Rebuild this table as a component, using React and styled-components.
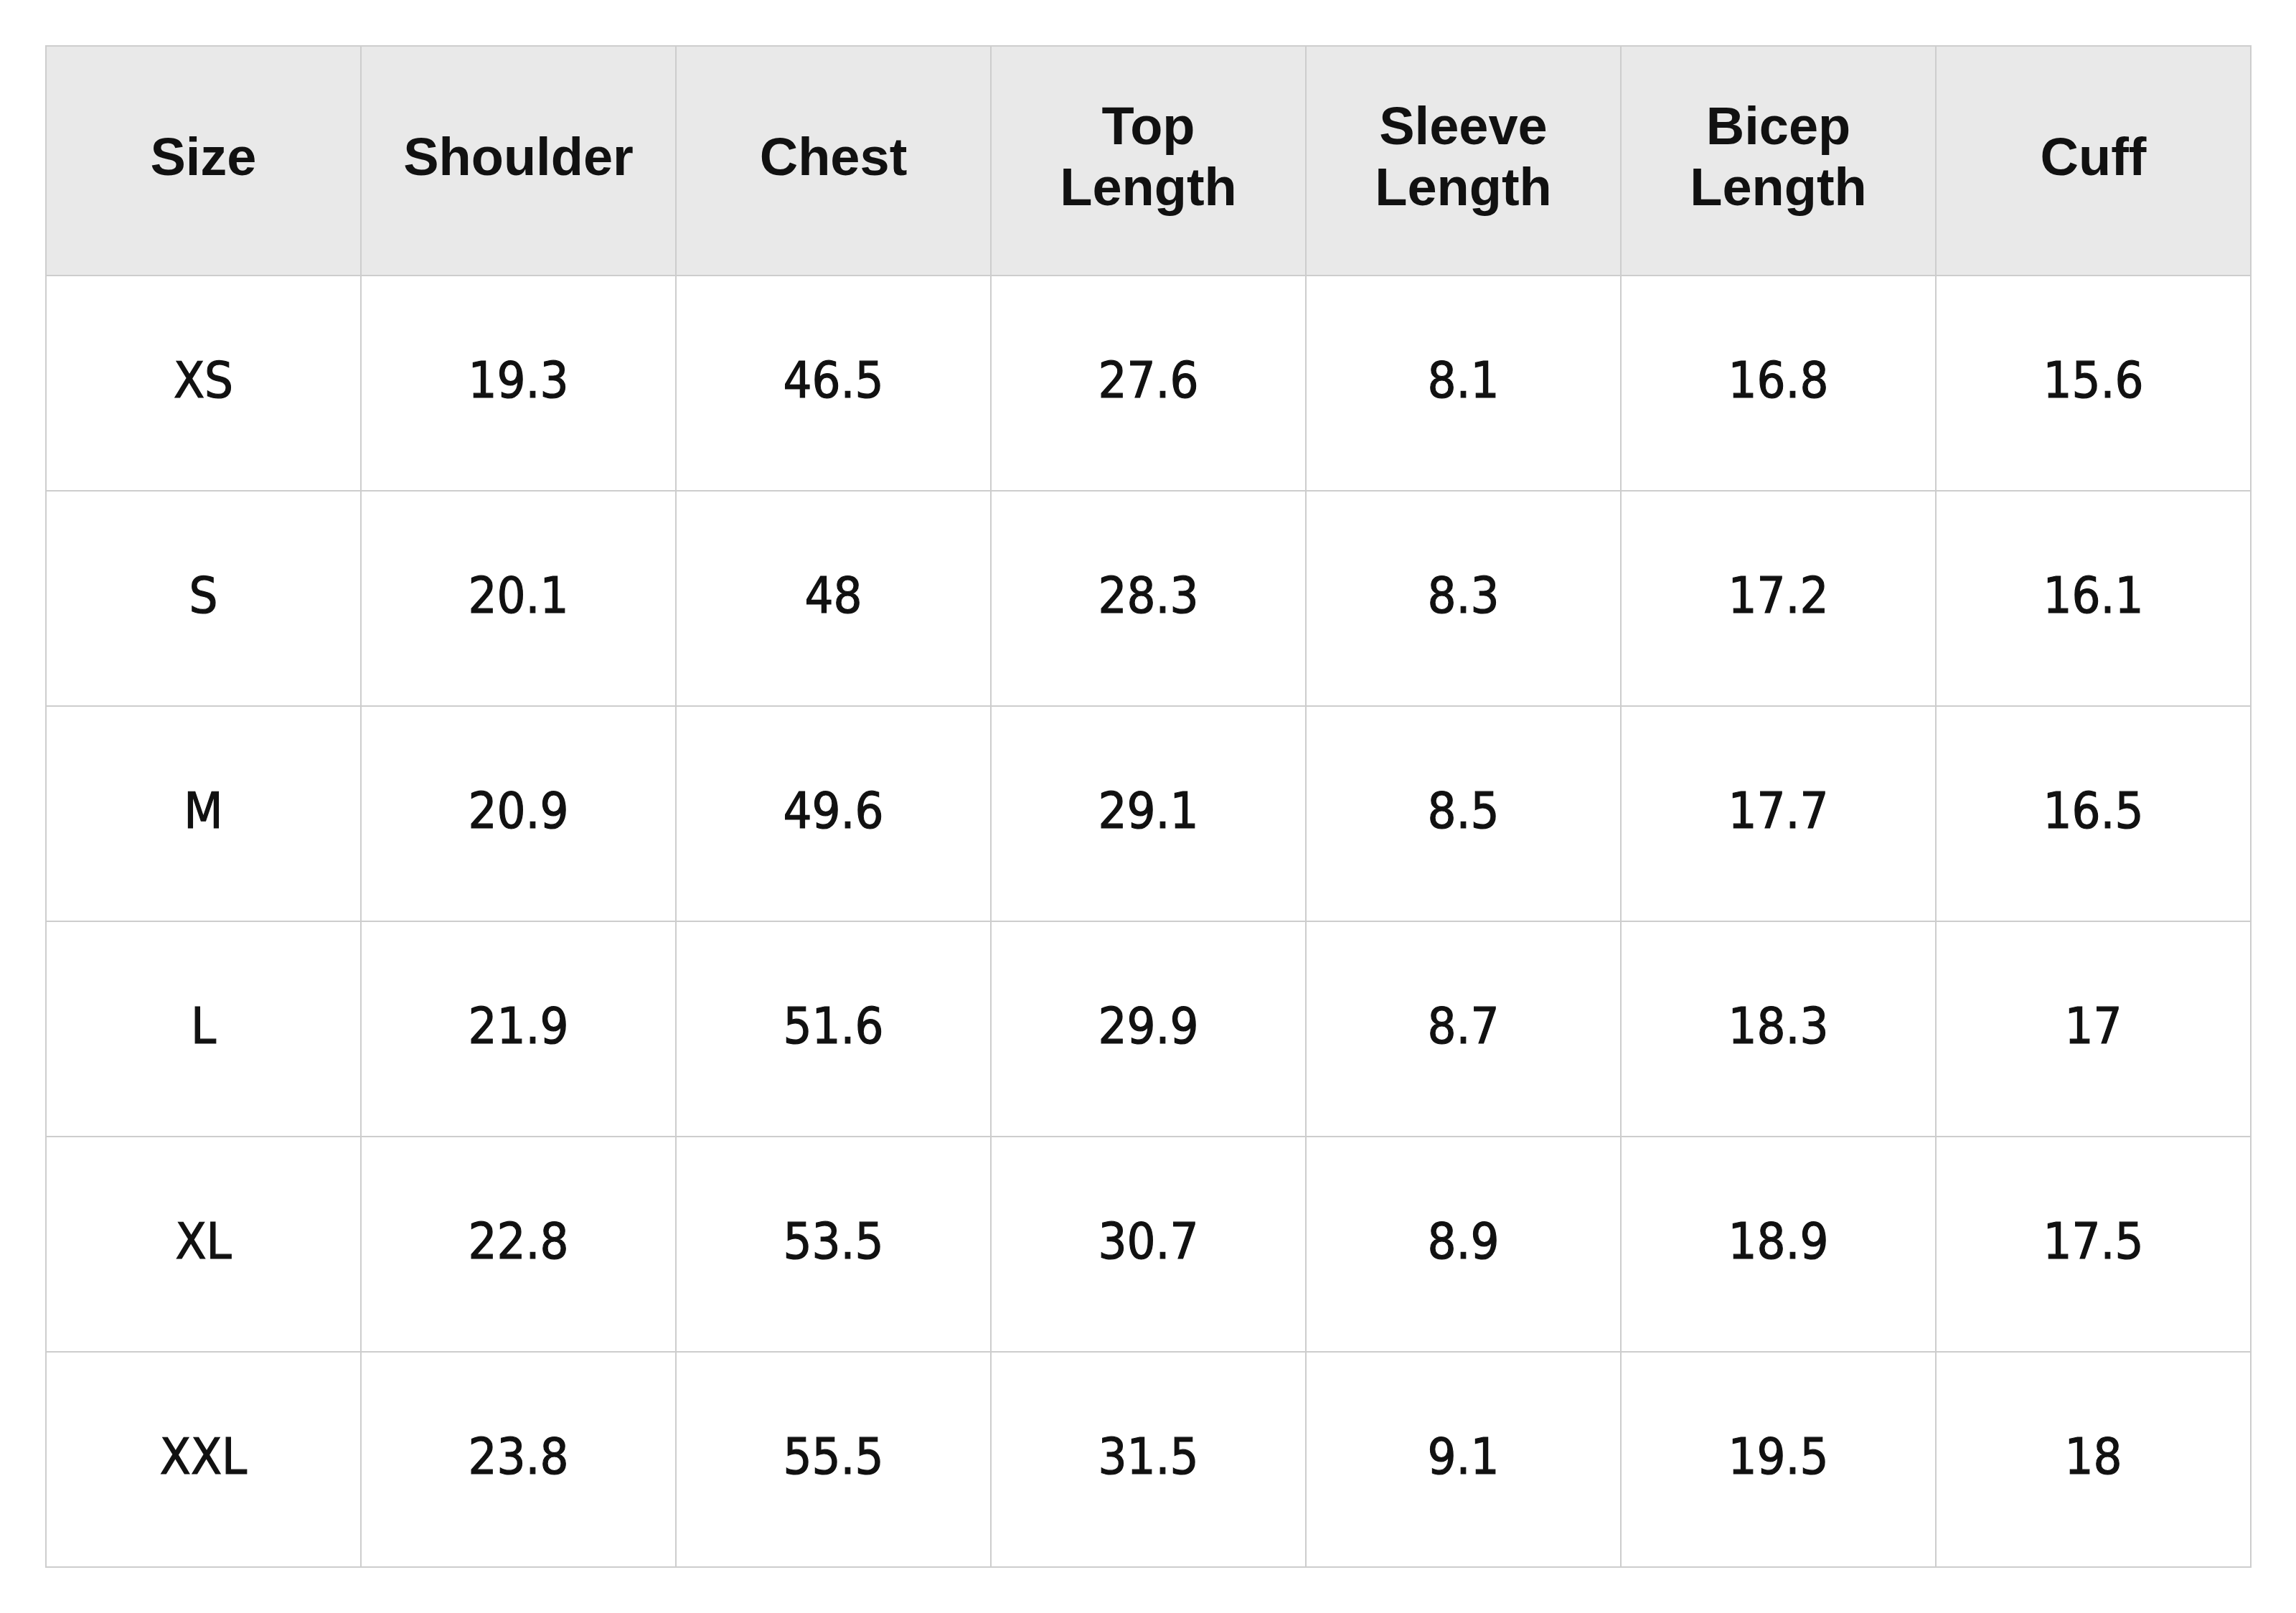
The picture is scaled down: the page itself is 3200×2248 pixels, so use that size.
import React from 'react'
import styled, { createGlobalStyle } from 'styled-components'

const GlobalStyle = createGlobalStyle`
  html, body {
    margin: 0;
    padding: 0;
    background: #ffffff;
  }
`

const Page = styled.div`
  padding: 63px 62px 60px 63px;
  background: #ffffff;
`

const Table = styled.table`
  width: 3075px;
  border-collapse: collapse;
  table-layout: fixed;
  border: 2px solid #cdcdcd;
  color: #111111;
`

const HeadCell = styled.th`
  height: 306px;
  padding: 0 20px 12px;
  background: #e9e9e9;
  border: 2px solid #cdcdcd;
  font-family: "Liberation Sans", Arial, sans-serif;
  font-weight: 700;
  font-size: 74px;
  line-height: 85px;
  text-align: center;
  vertical-align: middle;
`

const Cell = styled.td`
  height: 290px;
  padding: 0 0 8px;
  border: 2px solid #cdcdcd;
  font-family: "Liberation Sans Narrow", "DejaVu Sans Condensed", "Liberation Sans", sans-serif;
  font-weight: 400;
  font-size: 70px;
  -webkit-text-stroke: 1.2px #111111;
  text-align: center;
  vertical-align: middle;
`

const columns = ['Size', 'Shoulder', 'Chest', 'Top\nLength', 'Sleeve\nLength', 'Bicep\nLength', 'Cuff']

const rows = [
  ['XS', '19.3', '46.5', '27.6', '8.1', '16.8', '15.6'],
  ['S', '20.1', '48', '28.3', '8.3', '17.2', '16.1'],
  ['M', '20.9', '49.6', '29.1', '8.5', '17.7', '16.5'],
  ['L', '21.9', '51.6', '29.9', '8.7', '18.3', '17'],
  ['XL', '22.8', '53.5', '30.7', '8.9', '18.9', '17.5'],
  ['XXL', '23.8', '55.5', '31.5', '9.1', '19.5', '18'],
]

export default function App() {
  return (
    <Page>
      <GlobalStyle />
      <Table>
        <thead>
          <tr>
            {columns.map((c) => (
              <HeadCell key={c}>
                {c.split('\n').map((line, i) => (
                  <div key={i}>{line}</div>
                ))}
              </HeadCell>
            ))}
          </tr>
        </thead>
        <tbody>
          {rows.map((r) => (
            <tr key={r[0]}>
              {r.map((v, i) => (
                <Cell key={i}>{v}</Cell>
              ))}
            </tr>
          ))}
        </tbody>
      </Table>
    </Page>
  )
}
